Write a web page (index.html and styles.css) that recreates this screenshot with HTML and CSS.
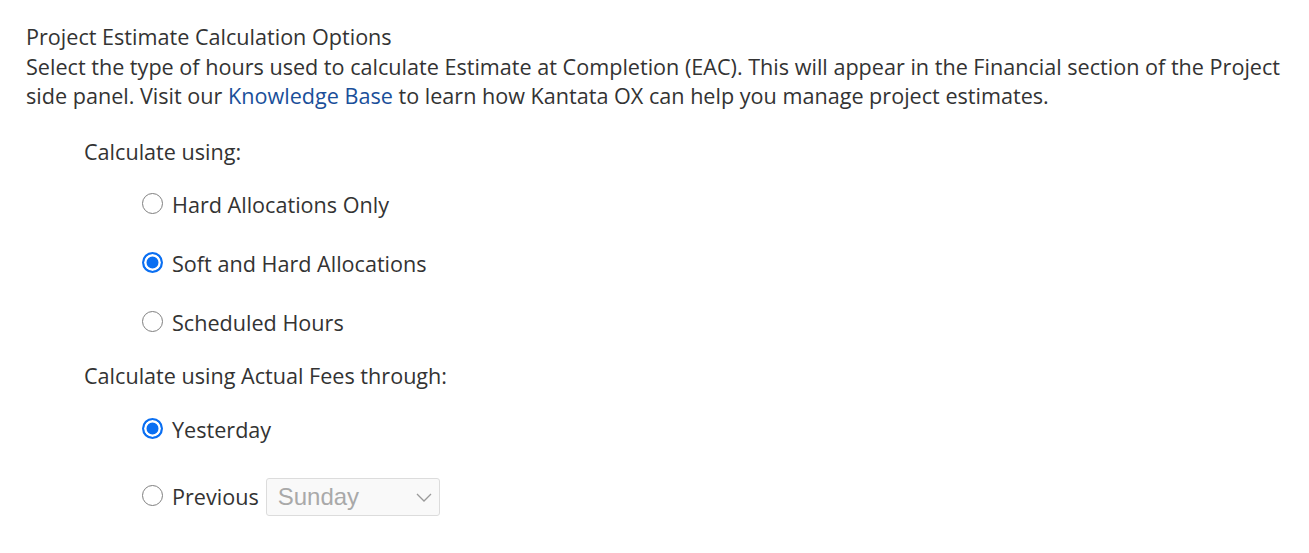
FILE: index.html
```html
<!DOCTYPE html>
<html lang="en">
<head>
<meta charset="utf-8">
<title>Project Estimate Calculation Options</title>
<link rel="stylesheet" href="styles.css">
</head>
<body>
<main class="settings">
  <section class="intro">
    <div class="intro-title">Project Estimate Calculation Options</div>
    <div class="intro-text">Select the type of hours used to calculate Estimate at Completion (EAC). This will appear in the Financial section of the Project side panel. Visit our <a class="link" href="#">Knowledge Base</a> to learn how Kantata OX can help you manage project estimates.</div>
  </section>

  <section class="group">
    <div class="group-label">Calculate using:</div>
    <div class="options">
      <label class="option"><input class="radio" type="radio" name="calc"><span>Hard Allocations Only</span></label>
      <label class="option"><input class="radio" type="radio" name="calc" checked><span>Soft and Hard Allocations</span></label>
      <label class="option"><input class="radio" type="radio" name="calc"><span>Scheduled Hours</span></label>
    </div>
  </section>

  <section class="group">
    <div class="group-label">Calculate using Actual Fees through:</div>
    <div class="options options-fees">
      <label class="option"><input class="radio" type="radio" name="fees" checked><span>Yesterday</span></label>
      <div class="option option-select">
        <label class="option-inline"><input class="radio" type="radio" name="fees"><span>Previous</span></label>
        <span class="select-wrap">
          <select class="select" disabled>
            <option>Sunday</option>
            <option>Monday</option>
            <option>Tuesday</option>
            <option>Wednesday</option>
            <option>Thursday</option>
            <option>Friday</option>
            <option>Saturday</option>
          </select>
          <svg class="chevron" width="16" height="9" viewBox="0 0 16 9" aria-hidden="true"><path d="M1 1l7 7 7-7" fill="none" stroke="#9a9a9a" stroke-width="1.3"/></svg>
        </span>
      </div>
    </div>
  </section>
</main>
</body>
</html>
```

FILE: styles.css
```css
html, body {
  margin: 0;
  padding: 0;
  background: #ffffff;
}

body {
  font-family: "Open Sans", "Noto Sans", sans-serif;
  font-size: 21.6px;
  line-height: 29.5px;
  color: #333333;
}

.settings {
  padding: 22px 20px 0 26px;
}

.link {
  color: #1a4f9a;
  text-decoration: none;
}

.group {
  margin-top: 26px;
  padding-left: 58px;
}

.group + .group {
  margin-top: 23px;
}

.group-label {
  height: 30px;
  line-height: 30px;
}

.options {
  display: flex;
  flex-direction: column;
  gap: 29px;
  margin-top: 23px;
  padding-left: 58px;
}

.options-fees {
  margin-top: 24px;
}

.option,
.option-inline {
  display: flex;
  align-items: center;
  gap: 9px;
  height: 30px;
  cursor: pointer;
}

.option-select {
  height: 38px;
  gap: 7px;
  margin-top: 4px;
}

.radio {
  appearance: none;
  -webkit-appearance: none;
  margin: 0;
  width: 21px;
  height: 21px;
  border-radius: 50%;
  border: 1.5px solid #7f7f7f;
  background: #ffffff;
  box-sizing: border-box;
  flex: none;
  position: relative;
  top: -1px;
}

.radio:checked {
  border: 2px solid #0a6ff2;
  background: #0a6ff2;
  box-shadow: inset 0 0 0 2.5px #ffffff;
}

.select-wrap {
  position: relative;
  display: inline-flex;
  height: 38px;
}

.select {
  appearance: none;
  -webkit-appearance: none;
  width: 174px;
  height: 38px;
  min-height: 38px;
  box-sizing: border-box;
  padding: 0 36px 0 11px;
  border: 1px solid #dcdcdc;
  border-radius: 3px;
  background: #f9f9f9;
  color: #a9a9a9;
  font-family: "Liberation Sans", Arial, sans-serif;
  font-size: 24px;
  opacity: 1;
}

.chevron {
  position: absolute;
  right: 8px;
  top: 15px;
  pointer-events: none;
}
```
